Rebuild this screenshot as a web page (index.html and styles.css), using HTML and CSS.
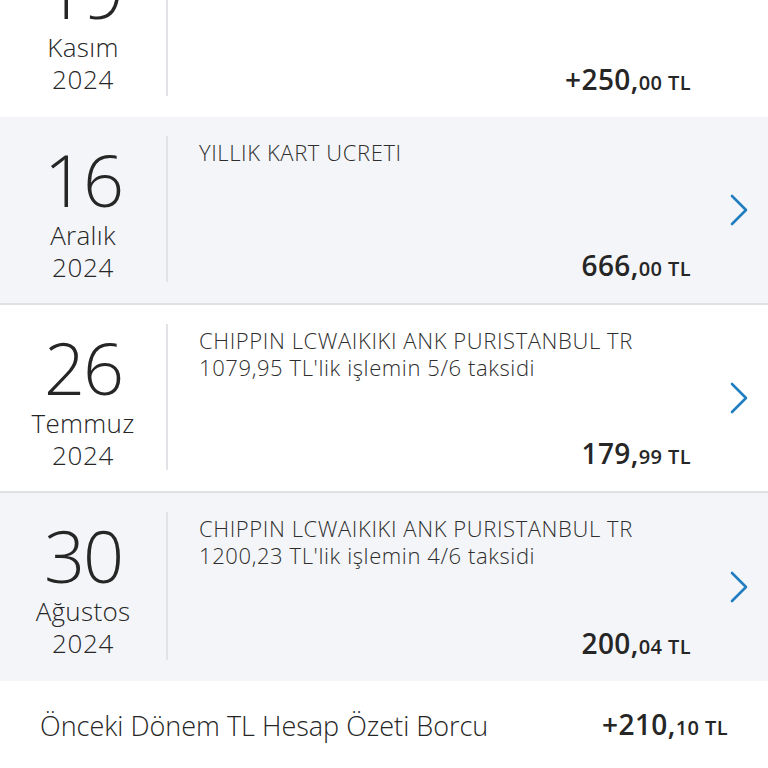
FILE: index.html
```html
<!DOCTYPE html>
<html lang="tr">
<head>
<meta charset="utf-8">
<title>Hesap Özeti</title>
<link rel="stylesheet" href="styles.css">
</head>
<body>
<div class="list">
  <div class="row">
    <div class="date"><div class="day">19</div><div class="month">Kasım</div><div class="year">2024</div></div>
    <div class="content">
      <div class="title">ÖDEMENİZ İÇİN TEŞEKKÜRLER</div>
      <div class="amount">+250,<span class="dec">00 TL</span></div>
    </div>
    <div class="chev"></div>
  </div>
  <div class="row alt line">
    <div class="date"><div class="day">16</div><div class="month">Aralık</div><div class="year">2024</div></div>
    <div class="content">
      <div class="title">YILLIK KART UCRETI</div>
      <div class="amount">666,<span class="dec">00 TL</span></div>
    </div>
    <div class="chev"><svg viewBox="0 0 20 32" width="20" height="32"><polyline points="3,2 17,16 3,30" fill="none" stroke="#1f7dc0" stroke-width="2.6" stroke-linecap="round" stroke-linejoin="round"/></svg></div>
  </div>
  <div class="row line">
    <div class="date"><div class="day">26</div><div class="month">Temmuz</div><div class="year">2024</div></div>
    <div class="content">
      <div class="title">CHIPPIN LCWAIKIKI ANK PURISTANBUL TR<br>1079,95 TL'lik işlemin 5/6 taksidi</div>
      <div class="amount">179,<span class="dec">99 TL</span></div>
    </div>
    <div class="chev"><svg viewBox="0 0 20 32" width="20" height="32"><polyline points="3,2 17,16 3,30" fill="none" stroke="#1f7dc0" stroke-width="2.6" stroke-linecap="round" stroke-linejoin="round"/></svg></div>
  </div>
  <div class="row alt">
    <div class="date"><div class="day">30</div><div class="month">Ağustos</div><div class="year">2024</div></div>
    <div class="content">
      <div class="title">CHIPPIN LCWAIKIKI ANK PURISTANBUL TR<br>1200,23 TL'lik işlemin 4/6 taksidi</div>
      <div class="amount">200,<span class="dec">04 TL</span></div>
    </div>
    <div class="chev"><svg viewBox="0 0 20 32" width="20" height="32"><polyline points="3,2 17,16 3,30" fill="none" stroke="#1f7dc0" stroke-width="2.6" stroke-linecap="round" stroke-linejoin="round"/></svg></div>
  </div>
</div>
<div class="footer">
  <div class="f-label">Önceki Dönem TL Hesap Özeti Borcu</div>
  <div class="amount">+210,<span class="dec">10 TL</span></div>
</div>
</body>
</html>
```
FILE: styles.css
```css
html, body {
  margin: 0;
  padding: 0;
  background: #ffffff;
  font-family: "Open Sans", "Noto Sans", sans-serif;
  color: #2a2a2a;
  overflow: hidden;
}
.list {
  margin-top: -71px;
}
.row {
  display: flex;
  height: 188px;
  box-sizing: border-box;
  background: #ffffff;
}
.row.alt {
  background: #f4f5f8;
}
.row.line {
  border-bottom: 2px solid #e0e1e5;
}
.date {
  width: 166px;
  margin: 19px 0 21px;
  border-right: 2px solid #e1e3e7;
  text-align: center;
  font-weight: 300;
  color: #262626;
}
.day {
  font-size: 72px;
  line-height: 80px;
  padding-top: 3px;
  letter-spacing: -2px;
}
.month, .year {
  font-size: 26px;
  line-height: 32px;
  letter-spacing: 0.3px;
}
.year {
  letter-spacing: 0.6px;
}
.content {
  flex: 1;
  display: flex;
  flex-direction: column;
  justify-content: space-between;
  padding: 22px 0 19px 31px;
}
.title {
  font-size: 22px;
  line-height: 27px;
  font-weight: 300;
  letter-spacing: 0.6px;
  color: #2e2e2e;
}
.amount {
  text-align: right;
  font-size: 28px;
  line-height: 30px;
  font-weight: 600;
  letter-spacing: 0.4px;
  color: #262626;
}
.dec {
  font-size: 20px;
}
.chev {
  width: 77px;
  display: flex;
  align-items: center;
  justify-content: flex-start;
  padding-left: 38px;
  box-sizing: border-box;
}
.footer {
  display: flex;
  align-items: center;
  justify-content: space-between;
  padding: 26px 40px 0 40px;
}
.f-label {
  font-size: 27px;
  font-weight: 300;
  color: #262626;
}
```
